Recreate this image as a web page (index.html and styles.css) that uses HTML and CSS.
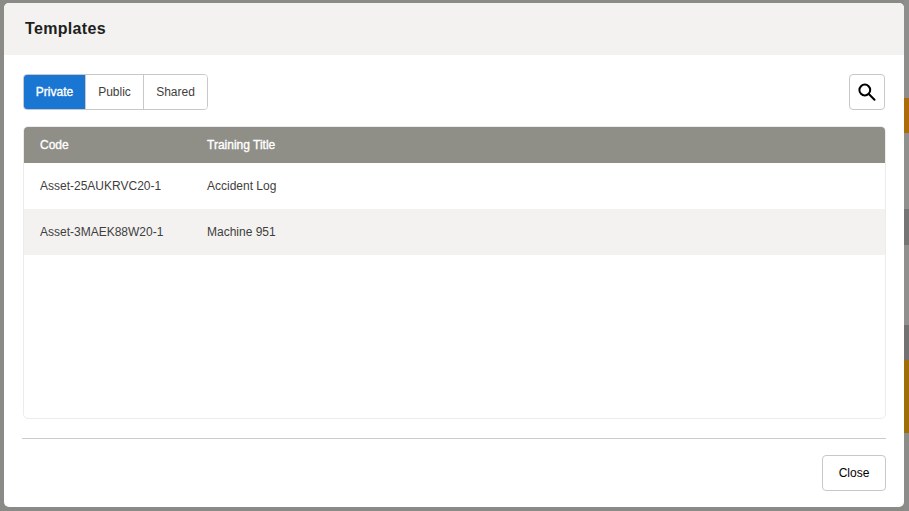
FILE: index.html
```html
<!DOCTYPE html>
<html lang="en">
<head>
<meta charset="utf-8">
<title>Templates</title>
<link rel="stylesheet" href="styles.css">
</head>
<body>
<div class="backdrop">
  <div class="strip strip-a"></div>
  <div class="strip strip-orange-a"></div>
  <div class="strip strip-b"></div>
  <div class="strip strip-dark-a"></div>
  <div class="strip strip-c"></div>
  <div class="strip strip-dark-b"></div>
  <div class="strip strip-orange-b"></div>
  <div class="strip strip-d"></div>
</div>
<main class="modal">
  <header class="modal-header"><h1 class="modal-title">Templates</h1></header>
  <section class="modal-body">
    <div class="toolbar">
      <div class="tabs">
        <button class="tab tab-active">Private</button>
        <button class="tab tab-public">Public</button>
        <button class="tab tab-shared">Shared</button>
      </div>
      <button class="search-btn" aria-label="Search">
        <svg width="18" height="18" viewBox="0 0 18 18" fill="none" stroke="#000" stroke-width="2"><circle cx="6.8" cy="7" r="5.4"/><path d="M10.8 11l5.7 5.7" stroke-linecap="round"/></svg>
      </button>
    </div>
    <div class="table">
      <div class="row row-head"><div class="cell-code">Code</div><div>Training Title</div></div>
      <div class="row"><div class="cell-code">Asset-25AUKRVC20-1</div><div>Accident Log</div></div>
      <div class="row row-alt"><div class="cell-code">Asset-3MAEK88W20-1</div><div>Machine 951</div></div>
    </div>
  </section>
  <footer class="modal-footer"><button class="close-btn">Close</button></footer>
</main>
</body>
</html>
```
FILE: styles.css
```css
* { box-sizing: border-box; }
html, body { margin: 0; height: 100%; }
body {
  width: 909px;
  height: 511px;
  overflow: hidden;
  background: #8a8a86;
  font-family: "Liberation Sans", Arial, sans-serif;
  font-size: 12px;
  color: #3f3e3d;
  padding: 3px 5px 4px 4px;
}
button { font-family: inherit; font-size: 12px; cursor: pointer; }

.backdrop {
  position: fixed;
  top: 0;
  right: 0;
  width: 5px;
  height: 511px;
  display: flex;
  flex-direction: column;
}
.strip-a { height: 98px; background: #8e8e8c; }
.strip-orange-a { height: 35px; background: #ad6c08; }
.strip-b {
  height: 76px;
  background: #90908e;
  border-top: 13px solid #90908e;
}
.strip-dark-a { height: 36px; background: #757575; }
.strip-c { height: 80px; background: #90908e; }
.strip-dark-b { height: 35px; background: #727272; }
.strip-orange-b { height: 73px; background: #9e6f06; }
.strip-d { flex: 1; background: #8c8c8a; }

.modal {
  position: relative;
  width: 900px;
  height: 504px;
  background: #fff;
  border-radius: 5px;
  overflow: hidden;
  display: flex;
  flex-direction: column;
}
.modal-header {
  height: 52px;
  background: #f3f2f1;
  display: flex;
  align-items: center;
  padding-left: 21px;
}
.modal-title {
  margin: 0;
  font-size: 16px;
  font-weight: 700;
  letter-spacing: 0.33px;
  color: #201f1e;
}
.modal-body {
  flex: 1;
  padding: 19px 18px 0 19px;
  display: flex;
  flex-direction: column;
}
.toolbar {
  height: 36px;
  display: flex;
  justify-content: space-between;
  margin-bottom: 16px;
  margin-right: 1px;
}
.tabs {
  display: flex;
  border: 1px solid #c8c8c8;
  border-radius: 4px;
  overflow: hidden;
}
.tab {
  background: #fff;
  border: 0;
  border-left: 1px solid #c8c8c8;
  padding: 0;
  color: #3f3e3d;
}
.tab-active {
  width: 61px;
  border-left: 0;
  background: #1976d2;
  color: #fff;
  -webkit-text-stroke: 0.35px #fff;
}
.tab-public { width: 58px; }
.tab-shared { width: 64px; }
.search-btn {
  width: 36px;
  height: 36px;
  background: #fff;
  border: 1px solid #c8c8c8;
  border-radius: 4px;
  padding: 0;
  display: flex;
  align-items: center;
  justify-content: center;
}
.table {
  height: 293px;
  border: 1px solid #ececec;
  border-radius: 5px;
  overflow: hidden;
}
.row {
  height: 46px;
  display: flex;
  align-items: center;
  margin: 0 -1px;
  padding-left: 17px;
}
.row-head {
  height: 37px;
  margin-top: -1px;
  background: #8f8f87;
  color: #fff;
  -webkit-text-stroke: 0.35px #fff;
}
.row-alt { background: #f3f2f1; border-radius: 0 0 3px 3px; }
.cell-code { width: 167px; }
.modal-footer {
  margin: 0 18px;
  height: 69px;
  border-top: 1px solid #cbcbcb;
  display: flex;
  justify-content: flex-end;
  align-items: flex-start;
  padding-top: 16px;
}
.close-btn {
  width: 64px;
  height: 36px;
  background: #fff;
  border: 1px solid #c8c8c8;
  border-radius: 4px;
  color: #000;
  padding: 0;
}
```
